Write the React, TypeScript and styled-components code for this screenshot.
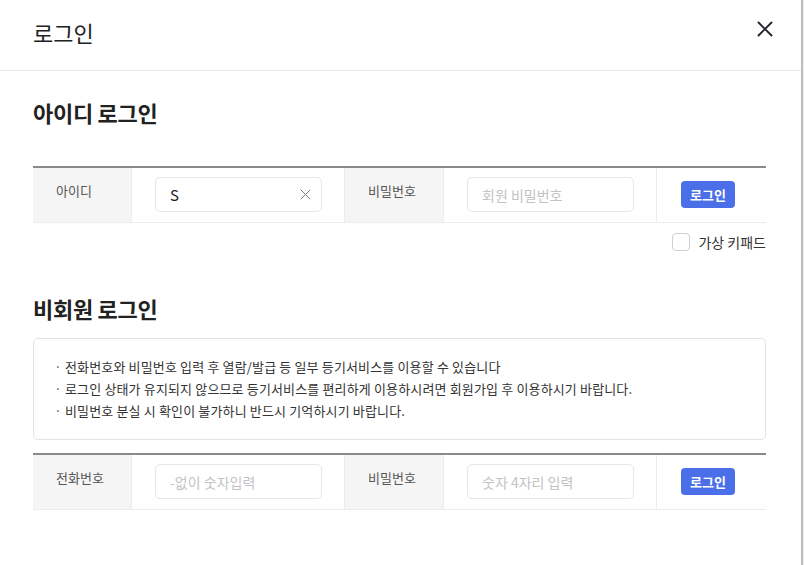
import { useState } from "react";
import styled, { createGlobalStyle } from "styled-components";

const GlobalStyle = createGlobalStyle`
    * { box-sizing: border-box; }
    html, body {
        margin: 0;
        padding: 0;
        background: #f2f2f2;
        font-family: "Noto Sans CJK KR", "Noto Sans", sans-serif;
        color: #222;
    }
`;

const Modal = styled.div`
    width: 803px;
    height: 565px;
    background: #fff;
    border-right: 2px solid #bdbdbd;
    overflow: hidden;
`;

const Header = styled.div`
    height: 71px;
    display: flex;
    align-items: center;
    justify-content: space-between;
    padding: 0 28px 0 33px;
    border-bottom: 1px solid #e6e6e6;
`;

const Title = styled.h1`
    margin: 0 0 7px;
    font-size: 22px;
    font-weight: 400;
    color: #222;
`;

const CloseButton = styled.button`
    border: 0;
    background: none;
    padding: 0;
    margin-bottom: 12px;
    width: 17px;
    height: 17px;
    cursor: pointer;
    display: flex;
    align-items: center;
    justify-content: center;
`;

const Body = styled.div`
    padding: 0 35px 0 33px;
`;

const SectionTitle = styled.h2`
    margin: 0;
    font-size: 22px;
    font-weight: 700;
    color: #222;
    letter-spacing: -0.3px;
`;

const FirstTitle = styled(SectionTitle)`
    padding-top: 25px;
    height: 95px;
`;

const SecondTitle = styled(SectionTitle)`
    height: 46px;
`;

const Row = styled.div`
    display: grid;
    grid-template-columns: 99px 213px 99px 213px 1fr;
    border-top: 2px solid #8a8a8a;
    border-bottom: 1px solid #ececec;
    height: 57px;
`;

const LabelCell = styled.div`
    background: #f5f5f5;
    font-size: 13px;
    color: #555;
    padding: 13px 0 0 23px;
    border-right: 1px solid #ececec;
`;

const InputCell = styled.div`
    display: flex;
    align-items: center;
    padding: 0 22px 1px 23px;
    border-right: 1px solid #ececec;
`;

const InputBox = styled.div`
    position: relative;
    width: 100%;
    height: 35px;
    border: 1px solid #e6e6e6;
    border-radius: 5px;
    display: flex;
    align-items: center;
`;

const Field = styled.input`
    border: 0;
    outline: none;
    background: transparent;
    width: 100%;
    height: 100%;
    padding: 0 30px 0 14px;
    font-family: inherit;
    font-size: 15px;
    color: #222;
    &::placeholder {
        color: #c3c3c3;
        font-size: 14px;
    }
`;

const ClearButton = styled.button`
    position: absolute;
    right: 10px;
    top: 50%;
    transform: translateY(-50%);
    border: 0;
    background: none;
    padding: 0;
    width: 12px;
    height: 12px;
    display: flex;
    align-items: center;
    justify-content: center;
`;

const ButtonCell = styled.div`
    display: flex;
    align-items: center;
    padding: 0 0 1px 24px;
`;

const LoginButton = styled.button`
    width: 54px;
    height: 27px;
    border: 0;
    border-radius: 4px;
    background: #4b6fe8;
    color: #fff;
    font-family: inherit;
    font-size: 13px;
    font-weight: 700;
    cursor: pointer;
    padding: 0;
`;

const KeypadRow = styled.label`
    display: flex;
    justify-content: flex-end;
    align-items: center;
    gap: 8px;
    margin-top: 9px;
    height: 19px;
    font-size: 14px;
    color: #333;
`;

const CheckBox = styled.span`
    width: 18px;
    height: 18px;
    border: 1px solid #cfcfcf;
    border-radius: 4px;
    background: #fff;
`;

const Spacer = styled.div`
    height: 41px;
`;

const Notice = styled.ul`
    list-style: none;
    margin: 0 0 13px;
    padding: 17px 20px 16px 18px;
    border: 1px solid #e2e2e2;
    border-radius: 5px;
    height: 102px;
`;

const NoticeItem = styled.li`
    font-size: 13px;
    line-height: 22px;
    letter-spacing: 0.15px;
    color: #333;
    &::before {
        content: "·";
        display: inline-block;
        width: 12px;
        text-align: center;
        margin-right: 1px;
        color: #555;
    }
`;

const XIcon = ({ size, color, width }: { size: number; color: string; width: number }) => (
    <svg width={size} height={size} viewBox="0 0 16 16" fill="none">
        <path d="M1.5 1.5L14.5 14.5M14.5 1.5L1.5 14.5" stroke={color} strokeWidth={width} strokeLinecap="round" />
    </svg>
);

const App = () => {
    const [id, setId] = useState("S");
    const [pw, setPw] = useState("");
    const [phone, setPhone] = useState("");
    const [guestPw, setGuestPw] = useState("");

    return (
        <>
            <GlobalStyle />
            <Modal>
                <Header>
                    <Title>로그인</Title>
                    <CloseButton aria-label="닫기">
                        <XIcon size={16} color="#1f2230" width={1.9} />
                    </CloseButton>
                </Header>
                <Body>
                    <FirstTitle>아이디 로그인</FirstTitle>
                    <Row>
                        <LabelCell>아이디</LabelCell>
                        <InputCell>
                            <InputBox>
                                <Field value={id} onChange={(e) => setId(e.target.value)} />
                                {id && (
                                    <ClearButton onClick={() => setId("")}>
                                        <XIcon size={11} color="#777" width={1.4} />
                                    </ClearButton>
                                )}
                            </InputBox>
                        </InputCell>
                        <LabelCell>비밀번호</LabelCell>
                        <InputCell>
                            <InputBox>
                                <Field type="password" placeholder="회원 비밀번호" value={pw} onChange={(e) => setPw(e.target.value)} />
                            </InputBox>
                        </InputCell>
                        <ButtonCell>
                            <LoginButton>로그인</LoginButton>
                        </ButtonCell>
                    </Row>
                    <KeypadRow>
                        <CheckBox />
                        가상 키패드
                    </KeypadRow>
                    <Spacer />
                    <SecondTitle>비회원 로그인</SecondTitle>
                    <Notice>
                        <NoticeItem>전화번호와 비밀번호 입력 후 열람/발급 등 일부 등기서비스를 이용할 수 있습니다</NoticeItem>
                        <NoticeItem>로그인 상태가 유지되지 않으므로 등기서비스를 편리하게 이용하시려면 회원가입 후 이용하시기 바랍니다.</NoticeItem>
                        <NoticeItem>비밀번호 분실 시 확인이 불가하니 반드시 기억하시기 바랍니다.</NoticeItem>
                    </Notice>
                    <Row>
                        <LabelCell>전화번호</LabelCell>
                        <InputCell>
                            <InputBox>
                                <Field placeholder="-없이 숫자입력" value={phone} onChange={(e) => setPhone(e.target.value)} />
                            </InputBox>
                        </InputCell>
                        <LabelCell>비밀번호</LabelCell>
                        <InputCell>
                            <InputBox>
                                <Field type="password" placeholder="숫자 4자리 입력" value={guestPw} onChange={(e) => setGuestPw(e.target.value)} />
                            </InputBox>
                        </InputCell>
                        <ButtonCell>
                            <LoginButton>로그인</LoginButton>
                        </ButtonCell>
                    </Row>
                </Body>
            </Modal>
        </>
    );
};

export default App;
